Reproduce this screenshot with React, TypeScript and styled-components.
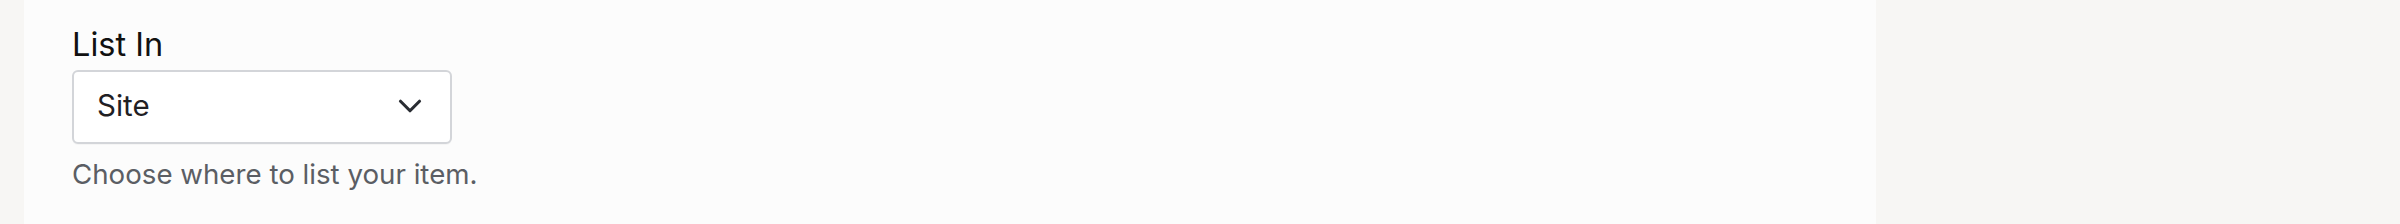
import React from "react";
import styled, { createGlobalStyle } from "styled-components";

const Global = createGlobalStyle`
  html, body { margin: 0; padding: 0; }
  body {
    background: #f7f6f4;
    font-family: Inter, "Noto Sans", "Liberation Sans", sans-serif;
  }
`;

const Page = styled.div`
  display: flex;
  height: 224px;
  padding-left: 24px;
  background: #f7f6f4;
`;

const Panel = styled.section`
  width: 1852px;
  height: 224px;
  box-sizing: border-box;
  background: #fcfcfc;
  padding: 25px 48px 0 48px;
  display: flex;
  flex-direction: column;
  align-items: flex-start;
`;

const Label = styled.label`
  font-size: 32.5px;
  line-height: 39px;
  color: #111111;
  font-weight: 400;
`;

const SelectBox = styled.div`
  margin-top: 6px;
  width: 380px;
  height: 74px;
  box-sizing: border-box;
  background: #ffffff;
  border: 2px solid #d3d5d9;
  border-radius: 6px;
  display: flex;
  align-items: center;
  justify-content: space-between;
  padding: 0 21px 0 23px;
  box-shadow: 0 1px 1px rgba(0, 0, 0, 0.03);
`;

const Value = styled.span`
  font-size: 29.5px;
  color: #1f2024;
  line-height: 36px;
  margin-top: -5px;
`;

const Chevron = styled.svg`
  width: 38px;
  height: 38px;
  margin-top: -3px;
  color: #2a2d33;
`;

const Help = styled.p`
  margin: 13px 0 0 0;
  font-size: 27.7px;
  line-height: 34px;
  color: #5b5e64;
`;

export default function App() {
  return (
    <>
      <Global />
      <Page>
        <Panel>
          <Label>List In</Label>
          <SelectBox>
            <Value>Site</Value>
            <Chevron viewBox="0 0 24 24" fill="none" stroke="currentColor" strokeWidth={2} strokeLinecap="round" strokeLinejoin="round">
              <path d="m6 9 6 6 6-6" />
            </Chevron>
          </SelectBox>
          <Help>Choose where to list your item.</Help>
        </Panel>
      </Page>
    </>
  );
}
